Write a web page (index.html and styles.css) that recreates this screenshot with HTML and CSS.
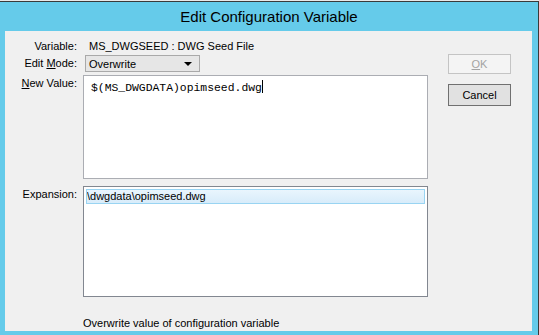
FILE: index.html
```html
<!DOCTYPE html>
<html lang="en">
<head>
    <meta charset="UTF-8">
    <title>Edit Configuration Variable</title>
    <link rel="stylesheet" href="styles.css">
</head>
<body>
    <div class="window">
        <div class="titlebar">Edit Configuration Variable</div>
        <div class="client">
            <div class="label">Variable:</div>
            <div class="value">MS_DWGSEED : DWG Seed File</div>
            <div class="buttons">
                <button class="btn disabled"><u>O</u>K</button>
                <button class="btn cancel">Cancel</button>
            </div>

            <div class="label">Edit <u>M</u>ode:</div>
            <div class="field">
                <div class="combo">
                    <span>Overwrite</span>
                    <span class="arrow"></span>
                </div>
            </div>

            <div class="label top"><u>N</u>ew Value:</div>
            <div class="field">
                <div class="edit">$(MS_DWGDATA)opimseed.dwg<span class="caret"></span></div>
            </div>

            <div class="label top">Expansion:</div>
            <div class="field">
                <div class="list">
                    <div class="item">\dwgdata\opimseed.dwg</div>
                </div>
            </div>

            <div class="status">Overwrite value of configuration variable</div>
        </div>
    </div>
</body>
</html>
```

FILE: styles.css
```css
* {
    box-sizing: border-box;
}

body {
    margin: 0;
    background: #e8e8e8;
    font-family: "Liberation Sans", Arial, sans-serif;
    font-size: 11px;
    color: #000;
}

.window {
    width: 539px;
    height: 334px;
    margin-top: 1px;
    background: #65cbea;
    border-top: 1px solid #3a3a3a;
    border-right: 1px solid #3a3a3a;
    display: flex;
    flex-direction: column;
}

.titlebar {
    height: 29px;
    line-height: 29px;
    text-align: center;
    font-size: 15px;
}

.client {
    flex: 1;
    margin: 0 6px 4px 5px;
    background: #f0f0f0;
    padding-top: 7px;
    display: grid;
    grid-template-columns: 72px 345px 63px;
    grid-template-rows: 17px 20px 111px 111px auto;
    column-gap: 6px;
}

.label {
    text-align: right;
    line-height: 17px;
    white-space: nowrap;
}

.label.top {
    line-height: 14px;
    padding-top: 1px;
}

.value {
    line-height: 17px;
    padding-left: 6px;
}

.buttons {
    grid-column: 3;
    grid-row: 1 / 4;
    margin-left: 14px;
    padding-top: 16px;
    display: flex;
    flex-direction: column;
    gap: 10px;
}

.btn {
    width: 63px;
    height: 20px;
    padding: 0;
    font-family: inherit;
    font-size: 11px;
    border: 1px solid #707070;
    background: #e1e1e1;
    color: #000;
}

.btn.disabled {
    border-color: #c4c4c4;
    background: #f4f4f4;
    color: #a3a3a3;
}

.btn.cancel {
    height: 22px;
}

.combo {
    width: 115px;
    height: 17px;
    margin-left: 2px;
    border: 1px solid #a9a9a9;
    background: #e6e6e6;
    display: flex;
    align-items: center;
    justify-content: space-between;
    padding: 0 7px 0 3px;
}

.arrow {
    width: 0;
    height: 0;
    border-left: 4px solid transparent;
    border-right: 4px solid transparent;
    border-top: 4px solid #000;
}

.edit {
    height: 104px;
    border: 1px solid #abadb3;
    background: #fff;
    padding: 4px 7px;
    font-family: "Liberation Mono", "Courier New", monospace;
    font-size: 11.4px;
    line-height: 14px;
}

.caret {
    display: inline-block;
    width: 1px;
    height: 13px;
    background: #000;
    vertical-align: -2px;
}

.list {
    height: 111px;
    border: 1px solid #828790;
    background: #fff;
    padding: 2px;
}

.item {
    height: 15px;
    line-height: 13px;
    border: 1px solid #99d4f2;
    background: linear-gradient(#e9f5fd, #d8ecfa);
    white-space: nowrap;
    overflow: hidden;
}

.status {
    grid-column: 2 / 4;
    margin-top: 19px;
    line-height: 15px;
}
```
